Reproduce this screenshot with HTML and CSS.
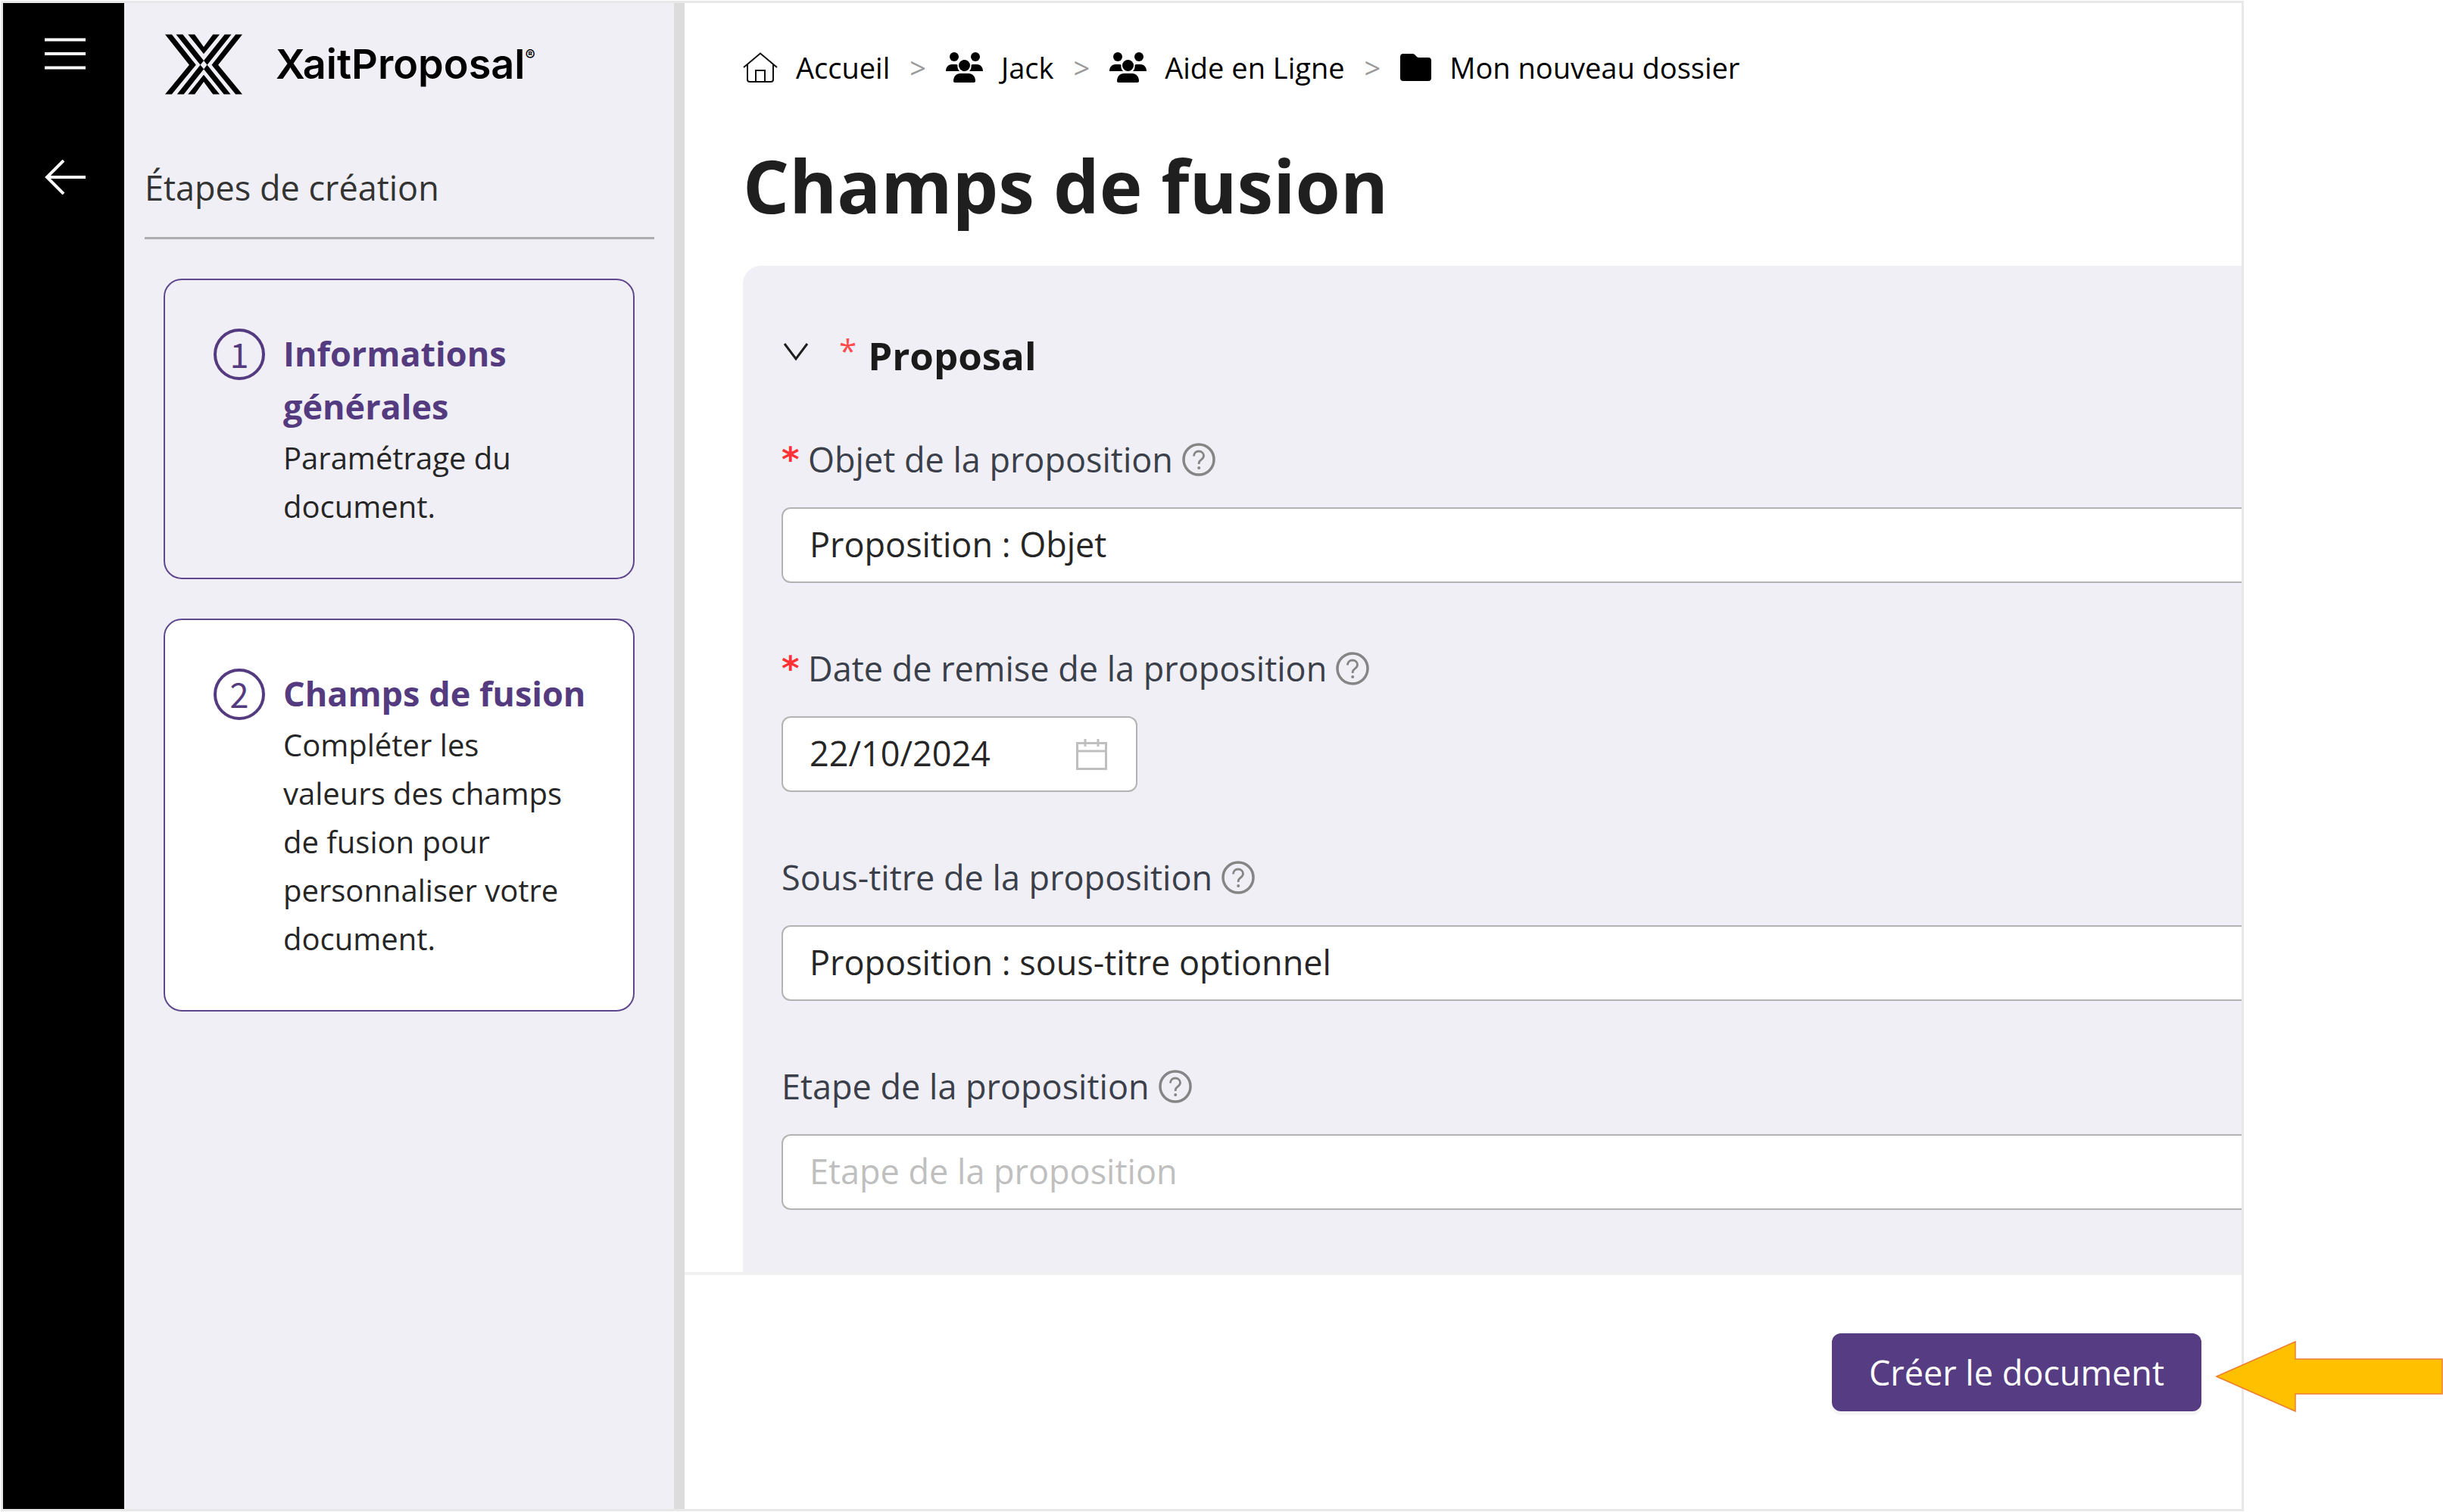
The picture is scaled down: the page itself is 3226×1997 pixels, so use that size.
FILE: index.html
```html
<!DOCTYPE html>
<html lang="fr">
<head>
<meta charset="utf-8">
<title>XaitProposal – Champs de fusion</title>
<link rel="stylesheet" href="styles.css">
</head>
<body>
<svg class="sprite" aria-hidden="true">
  <symbol id="users" viewBox="0 0 49 40">
    <circle cx="11" cy="6" r="6"/><circle cx="39" cy="6" r="6"/><circle cx="24.500" cy="17.500" r="7.500"/>
    <path d="M0 25c0-5 3-9 8-9h5q2 0 2.500 1c-.5 3 .5 6 2.500 8z"/>
    <path d="M49 25c0-5-3-9-8-9h-5q-2 0-2.500 1c.5 3-.5 6-2.500 8z"/>
    <path d="M10 38c0-6 4-10 9-10h11c5 0 9 4 9 10q0 2-2 2H12q-2 0-2-2z"/>
  </symbol>
  <symbol id="help" viewBox="0 0 44 44">
    <circle cx="22" cy="22" r="20" fill="none" stroke="currentColor" stroke-width="3.500"/>
    <path d="M15.500 17.500c0-4 2.800-6.500 6.500-6.500s6.500 2.500 6.500 6c0 5-6.300 5-6.300 9.500v1.500" fill="none" stroke="currentColor" stroke-width="2.800"/>
    <circle cx="22.200" cy="33" r="2"/>
  </symbol>
</svg>
<div class="page">
  <div class="app">
    <nav class="rail" aria-label="Navigation">
      <button class="rail-btn" type="button" aria-label="Menu"><svg width="54" height="42" viewBox="0 0 54 42"><path d="M0 2.500h54M0 21h54M0 39.500h54" stroke="#fff" stroke-width="4"/></svg></button>
      <button class="rail-btn" type="button" aria-label="Retour"><svg width="54" height="46" viewBox="0 0 54 46"><path d="M54 23H2M25 1L3 23l22 22" fill="none" stroke="#fff" stroke-width="4"/></svg></button>
    </nav>
    <aside class="side">
      <div class="brand">
        <svg width="102" height="80" viewBox="0 0 310 240"><path d="M0 0h27l97 122-97 118H0l97-118zM310 0h-27l-96 122 96 118h27l-97-118zM44 0h27l192 240h-27zM266 0h-27L48 240h27zM92 0h27l36 50 37-50h27l-64 78zM92 240h27l36-50 37 50h27l-64-78z"/></svg>
        <span class="brand-name">XaitProposal<sup class="brand-mark">®</sup></span>
      </div>
      <h2 class="side-title">Étapes de création</h2>
      <ol class="steps">
        <li class="step">
          <span class="step-num">1</span>
          <div class="step-body"><h3 class="step-title">Informations générales</h3><p class="step-text">Paramétrage du document.</p></div>
        </li>
        <li class="step step-current">
          <span class="step-num">2</span>
          <div class="step-body"><h3 class="step-title">Champs de fusion</h3><p class="step-text">Compléter les valeurs des champs de fusion pour personnaliser votre document.</p></div>
        </li>
      </ol>
    </aside>
    <main class="main">
      <div class="content">
        <nav class="crumbs" aria-label="Fil d'Ariane">
          <a class="crumb" href="#"><svg width="46" height="40" viewBox="0 0 46 40"><path d="M1 20L23 1.500 45 20M6 16v20q0 3 3 3h28q3 0 3-3V16M17 39V24h12v15" fill="none" stroke="#111" stroke-width="2"/></svg>Accueil</a>
          <span class="sep">&gt;</span>
          <a class="crumb" href="#"><svg width="49" height="40"><use href="#users"/></svg>Jack</a>
          <span class="sep">&gt;</span>
          <a class="crumb" href="#"><svg width="49" height="40"><use href="#users"/></svg>Aide en Ligne</a>
          <span class="sep">&gt;</span>
          <a class="crumb" href="#"><svg width="41" height="36" viewBox="0 0 41 36"><path d="M0 4q0-4 4-4h12q2 0 3 1l3 3q1 1 3 1h12q4 0 4 4v23q0 4-4 4H4q-4 0-4-4z"/></svg>Mon nouveau dossier</a>
        </nav>
        <h1 class="title">Champs de fusion</h1>
        <form class="panel" id="fields">
          <h2 class="group">
            <svg width="36" height="24" viewBox="0 0 36 24"><path d="M4 1l15 20L34 1" fill="none" stroke="#1f1f1f" stroke-width="3"/></svg>
            <span class="group-star">*</span>
            <span>Proposal</span>
          </h2>
          <div class="field">
            <label class="label" for="objet"><span class="star">*</span>Objet de la proposition<svg class="help" width="44" height="44"><use href="#help"/></svg></label>
            <input class="input" id="objet" type="text" value="Proposition : Objet">
          </div>
          <div class="field">
            <label class="label" for="date"><span class="star">*</span>Date de remise de la proposition<svg class="help" width="44" height="44"><use href="#help"/></svg></label>
            <div class="date">
              <input class="date-input" id="date" type="text" value="22/10/2024">
              <svg width="41" height="41" viewBox="0 0 41 41"><path d="M1.500 5.500h38v34h-38zM1.500 16h38M12 0v10M29 0v10" fill="none" stroke="#bfbfbf" stroke-width="3"/></svg>
            </div>
          </div>
          <div class="field">
            <label class="label" for="soustitre">Sous-titre de la proposition<svg class="help" width="44" height="44"><use href="#help"/></svg></label>
            <input class="input" id="soustitre" type="text" value="Proposition : sous-titre optionnel">
          </div>
          <div class="field">
            <label class="label" for="etape">Etape de la proposition<svg class="help" width="44" height="44"><use href="#help"/></svg></label>
            <input class="input" id="etape" type="text" placeholder="Etape de la proposition">
          </div>
        </form>
      </div>
      <footer class="footer"><button class="create" type="submit" form="fields">Créer le document</button></footer>
    </main>
  </div>
  <svg class="pointer" width="300" height="94" viewBox="0 0 300 94"><path d="M1 47L105 1v23h194v46H105v23z" fill="#ffc000" stroke="#ed7d31" stroke-width="1.500"/></svg>
</div>
</body>
</html>
```
FILE: styles.css
```css
* { box-sizing: border-box; }
body {
  margin: 0;
  background: #fff;
  color: #1f1f1f;
  font-family: "Open Sans", "Noto Sans", sans-serif;
  font-size: 45px;
}
h1, h2, h3, p, ol { margin: 0; padding: 0; }
svg { display: block; flex: none; }
.sprite { position: absolute; width: 0; height: 0; }

.page {
  position: relative;
  display: flex;
  min-height: 100vh;
  padding: 1px 263px 1px 1px;
}
.app {
  flex: 1;
  display: flex;
  min-width: 0;
  border: 3px solid #e8e8e8;
}

.rail {
  flex: none;
  display: flex;
  flex-direction: column;
  align-items: center;
  gap: 119px;
  width: 160px;
  padding: 46px 0 0 4px;
  background: #000;
}
.rail-btn { padding: 0; border: 0; background: none; }

.side {
  flex: none;
  width: 740px;
  padding: 41px 26px 26px 27px;
  background: #f0eff5;
  border-right: 14px solid #dcdcdc;
}
.brand {
  display: flex;
  align-items: center;
  gap: 44px;
  height: 80px;
  padding-left: 27px;
  color: #000;
}
.brand-name {
  font-family: Inter, sans-serif;
  font-size: 54px;
  font-weight: 600;
  line-height: 80px;
}
.brand-mark {
  font-size: 20px;
  font-weight: 700;
  line-height: 0;
  vertical-align: 24px;
}
.side-title {
  margin: 91px 0 52px;
  padding-bottom: 33px;
  border-bottom: 3px solid #adadb0;
  color: #333;
  font-size: 45px;
  font-weight: 400;
  line-height: 64px;
}
.steps {
  display: grid;
  gap: 52px;
  padding: 0 26px 0 25px;
  list-style: none;
}
.step {
  display: flex;
  align-items: flex-start;
  gap: 24px;
  padding: 62px 60px 62px 64px;
  border: 2px solid #5f478d;
  border-radius: 24px;
}
.step-current { background: #fff; }
.step-num {
  flex: none;
  width: 68px;
  height: 68px;
  margin-top: 2px;
  border: 4px solid #543b80;
  border-radius: 50%;
  color: #543b80;
  font-family: "Noto Sans CJK JP", sans-serif;
  font-size: 45px;
  line-height: 58px;
  text-align: center;
}
.step-title {
  color: #543b80;
  font-size: 45px;
  font-weight: 700;
  line-height: 70px;
}
.step-text {
  margin-top: 1px;
  color: #262626;
  font-size: 40px;
  line-height: 64px;
}

.main {
  flex: 1;
  display: flex;
  flex-direction: column;
  min-width: 0;
}
.content {
  flex: 1;
  display: flex;
  flex-direction: column;
  padding: 59px 0 0 77px;
}
.crumbs {
  display: flex;
  align-items: center;
  gap: 26px;
  font-size: 38px;
  line-height: 52px;
}
.crumb {
  display: flex;
  align-items: center;
  gap: 24px;
  color: #000;
  text-decoration: none;
}
.sep { color: #999; }
.title {
  margin: 65px 0 41px;
  color: #1f1f1f;
  font-size: 96px;
  font-weight: 700;
  line-height: 130px;
}
.panel {
  flex: 1;
  padding: 82px 0 80px 51px;
  background: #f0eff5;
  border-top-left-radius: 24px;
}
.group {
  display: flex;
  align-items: flex-start;
  gap: 15px;
  margin-bottom: 70px;
  color: #1a1a1a;
  font-size: 51px;
  font-weight: 700;
  line-height: 72px;
}
.group svg { margin: 20px 25px 0 0; }
.group-star {
  color: #ff4d4f;
  font-size: 42px;
  font-weight: 400;
  line-height: 60px;
}
.field + .field { margin-top: 81px; }
.label {
  display: flex;
  align-items: center;
  margin-bottom: 31px;
  color: #3a3f4a;
  line-height: 64px;
}
.star {
  width: 35px;
  color: #ff3236;
  font-family: "DejaVu Sans", sans-serif;
  font-size: 45px;
  font-weight: 700;
}
.help { margin-left: 12px; color: #858585; fill: currentColor; }
.input, .date {
  height: 100px;
  border: 2px solid #b3b3b3;
  background: #fff;
}
.input, .date-input {
  color: #262626;
  font-family: inherit;
  font-size: 45px;
}
.input {
  display: block;
  width: 100%;
  padding: 0 35px 4px;
  border-right: 0;
  border-radius: 12px 0 0 12px;
}
.input::placeholder { color: #bfbfbf; }
.date {
  display: flex;
  align-items: center;
  justify-content: space-between;
  width: 470px;
  padding: 0 38px 0 35px;
  border-radius: 12px;
}
.date-input {
  width: 300px;
  padding: 0 0 4px;
  border: 0;
  background: none;
}

.footer {
  flex: none;
  display: flex;
  justify-content: flex-end;
  padding: 77px 53px 129px;
  border-top: 4px solid #f0f0f0;
}
.create {
  height: 103px;
  padding: 0 49px;
  border: 0;
  border-radius: 12px;
  background: #563c82;
  box-shadow: 0 5px 0 rgba(0, 0, 0, .04);
  color: #fff;
  font-family: inherit;
  font-size: 45px;
}

.pointer {
  position: absolute;
  right: 0;
  bottom: 132px;
}
```
